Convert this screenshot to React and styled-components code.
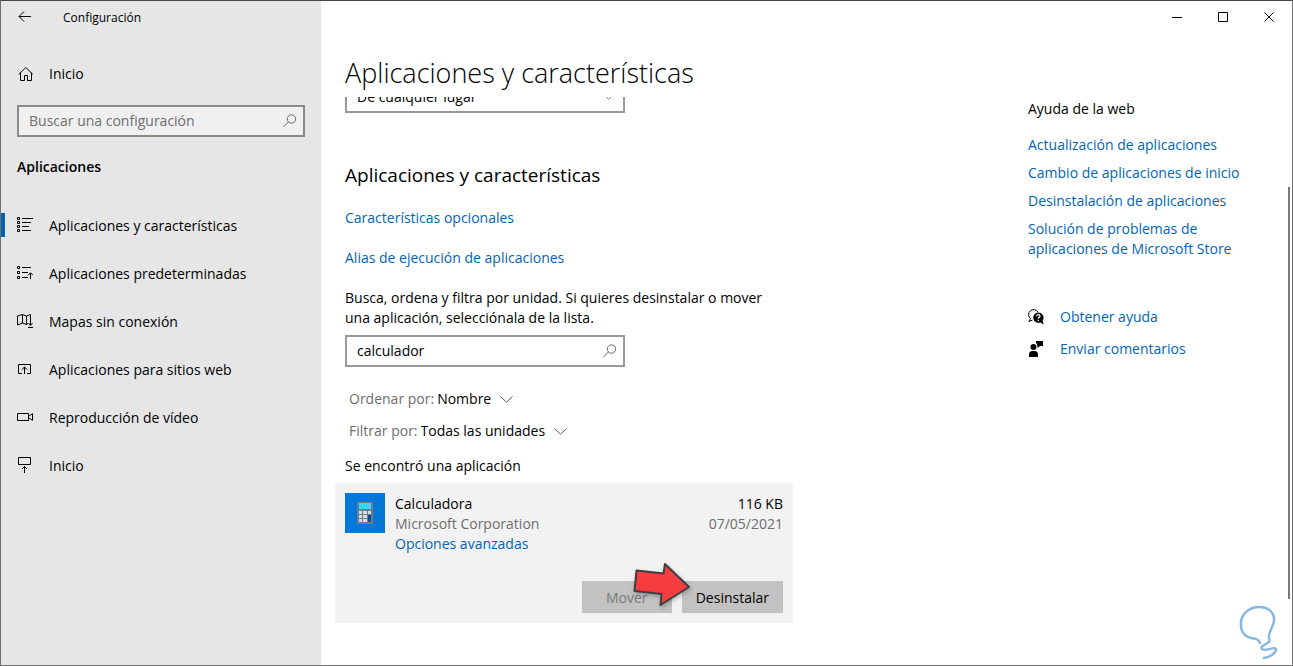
import React from 'react';
import styled, { createGlobalStyle } from 'styled-components';

const GlobalStyle = createGlobalStyle`
    * {
        box-sizing: border-box;
    }
    body {
        margin: 0;
        background-color: #fff;
        color: #000;
        font-family: 'Open Sans', 'Noto Sans', sans-serif;
        font-size: 14px;
        line-height: 20px;
    }
    button, input, select {
        font: inherit;
        color: inherit;
        border-radius: 0;
    }
    h1, h2, h3, p, ul {
        margin: 0;
        padding: 0;
    }
    ul {
        list-style: none;
    }
`

const SearchIcon = () => (
    <svg width="14" height="14" viewBox="0 0 14 14" fill="none" stroke="#6b6b6b">
        <circle cx="8.5" cy="5" r="4.2" />
        <path d="M5.4 8 L0.5 13" />
    </svg>
)

const Chevron = ({ width = 13 }) => (
    <svg width={width} height="7" viewBox="0 0 13 7" fill="none" stroke="#555">
        <path d="M0.5 0.5 L6.5 6.2 L12.5 0.5" />
    </svg>
)

const navList = [
    {
        text: 'Aplicaciones y características',
        active: true,
        icon: <path d="M0.5 0.5h2v2h-2z M0.5 4.5h2v2h-2z M0.5 8.5h2v2h-2z M0.5 12.5h2v2h-2z M5 1.5h11 M5 5.5h9 M5 9.5h7 M5 13.5h9" />,
    },
    {
        text: 'Aplicaciones predeterminadas',
        icon: <path d="M0.5 1.5h2v2h-2z M0.5 6.5h2v2h-2z M0.5 11.5h2v2h-2z M5 2.5h9 M5 7.5h6 M5 12.5h6 M13.5 14V8 M11 10.3l2.5-2.5 2.5 2.5" />,
    },
    {
        text: 'Mapas sin conexión',
        icon: <path d="M11 10.5L9.5 11.5L5.5 10L0.5 12V3L5.5 1.5L9.5 3L13.5 1.5V6 M5.5 1.5V10 M9.5 3V11.5 M13.5 6V12.5 M11.5 10l2 2.5 2-2.5 M11 14.5h5" />,
    },
    {
        text: 'Aplicaciones para sitios web',
        icon: <path d="M5 12.5H1.5v-9h12v9H10 M7.5 13V6 M4.8 8.7l2.7-2.7 2.7 2.7" />,
    },
    {
        text: 'Reproducción de vídeo',
        icon: <path d="M0.5 4.5h11v7h-11z M11.5 7.3L15.5 4.7v6.6L11.5 8.7" />,
    },
    {
        text: 'Inicio',
        icon: <path d="M1.5 0.5h12v7h-12z M7.5 16V9.5 M5 12l2.5-2.5L10 12" />,
    },
]

const webLinks = [
    'Actualización de aplicaciones',
    'Cambio de aplicaciones de inicio',
    'Desinstalación de aplicaciones',
    'Solución de problemas de aplicaciones de Microsoft Store',
]

const Sidebar = () => {
    return (
        <Side>
            <SideBar>
                <BackButton aria-label="Atrás">
                    <svg width="14" height="12" viewBox="0 0 14 12" fill="none" stroke="#000">
                        <path d="M13 5.5H1 M6 0.5L1 5.5l5 5" />
                    </svg>
                </BackButton>
                <WindowTitle>Configuración</WindowTitle>
            </SideBar>
            <HomeLink href="#inicio">
                <svg width="16" height="16" viewBox="0 0 16 16" fill="none" stroke="#000">
                    <path d="M0.8 8.3L7.8 1.5l7 6.8 M2.5 6.8v7.7h4v-5h3v5h4V6.8" />
                </svg>
                Inicio
            </HomeLink>
            <SearchBox as="label" $bg="#f0f0f0" $border="#8a8a8a">
                <SearchInput aria-label="Buscar una configuración" placeholder="Buscar una configuración" />
                <SearchIcon />
            </SearchBox>
            <SideTitle>Aplicaciones</SideTitle>
            <nav>
                {
                    navList.map((nav, index) => {
                        return (
                            <NavLink href={'#nav' + index} key={index} $active={nav.active}>
                                <svg width="16" height="16" viewBox="0 0 16 16" fill="none" stroke="#000">
                                    {nav.icon}
                                </svg>
                                <NavText>{nav.text}</NavText>
                            </NavLink>
                        )
                    })
                }
            </nav>
        </Side>
    )
}

const AppCard = () => {
    return (
        <Card>
            <CardTop>
                <AppIcon>
                    <svg width="16" height="22" viewBox="0 0 16 22">
                        <rect width="16" height="22" rx="1" fill="#6d7f8c" />
                        <rect x="2" y="1" width="12" height="6" fill="#45d0f5" />
                        <path d="M2 9h3v3H2z M6 9h4v3H6z M11 9h3v3h-3z M2 13h3v3H2z M6 13h4v3H6z M2 17h3v3H2z M6 17h4v3H6z" fill="#d5dbdf" />
                        <rect x="11" y="13" width="3" height="7" fill="#0b4a8b" />
                    </svg>
                </AppIcon>
                <AppInfo>
                    <p>Calculadora</p>
                    <Gray>Microsoft Corporation</Gray>
                    <Link href="#opciones">Opciones avanzadas</Link>
                </AppInfo>
                <AppMeta>
                    <p>116 KB</p>
                    <Gray>07/05/2021</Gray>
                </AppMeta>
            </CardTop>
            <Buttons>
                <CardButton disabled>Mover</CardButton>
                <CardButton>Desinstalar</CardButton>
                <Pointer width="60" height="46" viewBox="0 0 60 46">
                    <path d="M4 8L31 12L33 2L57 25L28 43L29 32L2 29Z" fill="#f53d40" stroke="none" />
                    <path d="M4.5 8.5L31.5 11.5L33 2L57 25L28.5 43L29.5 32L2.5 29Z" fill="#f53d40" stroke="#3c3f40" strokeWidth="2" strokeLinejoin="round" />
                </Pointer>
            </Buttons>
        </Card>
    )
}

const Help = () => {
    return (
        <HelpWrap>
            <h3>Ayuda de la web</h3>
            <ul>
                {
                    webLinks.map((text, index) => {
                        return (
                            <li key={index}><Link href={'#ayuda' + index}>{text}</Link></li>
                        )
                    })
                }
            </ul>
            <HelpRow href="#ayuda">
                <svg width="16" height="16" viewBox="0 0 16 16">
                    <path d="M2.6 9.6A5 5 0 1 1 10 3.2 M2.6 9.6L0.8 12.4L4.5 11.2" fill="none" stroke="#000" />
                    <path d="M10.2 3.4a5.2 5.2 0 0 1 4.4 8.2L15.8 15.4L12.4 13.4A5.2 5.2 0 1 1 10.2 3.4z" fill="#000" />
                    <path d="M8.6 7.2a1.7 1.5 0 1 1 2.6 1.2q-0.9 0.5-0.9 1.3 M10.3 10.8v1.2" fill="none" stroke="#fff" strokeWidth="1.2" />
                </svg>
                Obtener ayuda
            </HelpRow>
            <HelpRow href="#comentarios">
                <svg width="16" height="16" viewBox="0 0 16 16">
                    <circle cx="5.5" cy="6" r="3" />
                    <path d="M1 16v-2.5q0-3.5 3.5-3.5h2q3.5 0 3.5 3.5V16z M8 0h7v5h-3l-2.5 2V5H9.2Q9.4 2.5 8 2z" />
                </svg>
                Enviar comentarios
            </HelpRow>
        </HelpWrap>
    )
}

const App = () => {
    return (
        <Window>
            <GlobalStyle />
            <Sidebar />
            <Main>
                <Controls>
                    <ControlButton aria-label="Minimizar">
                        <svg width="11" height="11" fill="none" stroke="#000"><path d="M0 5.5h10" /></svg>
                    </ControlButton>
                    <ControlButton aria-label="Maximizar">
                        <svg width="11" height="11" fill="none" stroke="#000"><path d="M0.5 0.5h9v9h-9z" /></svg>
                    </ControlButton>
                    <ControlButton aria-label="Cerrar">
                        <svg width="11" height="11" fill="none" stroke="#000"><path d="M0.5 0.5l9 9 M9.5 0.5l-9 9" /></svg>
                    </ControlButton>
                </Controls>
                <PageTitle>Aplicaciones y características</PageTitle>
                <Scroll>
                    <Content>
                        <Origin>
                            <OriginSelect aria-label="Elegir de dónde obtener aplicaciones">
                                <option>De cualquier lugar</option>
                            </OriginSelect>
                            <Chevron width={9} />
                        </Origin>
                        <h2>Aplicaciones y características</h2>
                        <LinkRow><Link href="#opcionales">Características opcionales</Link></LinkRow>
                        <LinkRow><Link href="#alias">Alias de ejecución de aplicaciones</Link></LinkRow>
                        <Intro>
                            Busca, ordena y filtra por unidad. Si quieres desinstalar o mover una aplicación, selecciónala de la lista.
                        </Intro>
                        <SearchBox as="label" $bg="#fff" $border="#999">
                            <SearchInput aria-label="Buscar en esta lista" defaultValue="calculador" />
                            <SearchIcon />
                        </SearchBox>
                        <Filters>
                            <Filter>
                                Ordenar por:
                                <FilterSelect><option>Nombre</option></FilterSelect>
                                <Chevron />
                            </Filter>
                            <Filter>
                                Filtrar por:
                                <FilterSelect><option>Todas las unidades</option></FilterSelect>
                                <Chevron />
                            </Filter>
                        </Filters>
                        <p>Se encontró una aplicación</p>
                        <AppCard />
                    </Content>
                    <Help />
                    <Rail><Thumb /></Rail>
                </Scroll>
            </Main>
            <Bulb width="42" height="56" viewBox="0 0 42 56" fill="none" stroke="#86b7e2" strokeWidth="2.4" strokeLinecap="round">
                <path d="M22 38C20 33 17 34 13 33C5 31 2 24 3 17C4 8 12 2 21 2C31 2 37 8 36 16C35 23 31 26 31 31C31 34 32 35 31 37C27 40 22 41 24 44C27 47 37 41 38 44C38 49 31 52 26 53" />
            </Bulb>
        </Window>
    )
}

const Window = styled.div`
    position: relative;
    display: flex;
    min-height: 100vh;
    border: 1px solid #707070;
    border-top-color: #484848;
    overflow: hidden;
`

const Side = styled.aside`
    flex: 0 0 320px;
    background-color: #e6e6e6;
    a {
        color: #000;
        text-decoration: none;
    }
    > label {
        margin: 7px 16px 0;
    }
`

const SideBar = styled.div`
    display: flex;
    align-items: center;
    height: 32px;
`

const BackButton = styled.button`
    display: flex;
    align-items: center;
    justify-content: center;
    width: 48px;
    height: 32px;
    padding: 0;
    border: 0;
    background: none;
`

const WindowTitle = styled.span`
    margin-left: 14px;
    padding-top: 2px;
    font-size: 12px;
`

const HomeLink = styled.a`
    display: flex;
    align-items: center;
    gap: 15px;
    height: 48px;
    margin-top: 17px;
    padding-left: 17px;
`

const SearchBox = styled.div`
    display: flex;
    align-items: center;
    height: 32px;
    padding: 0 6px 0 10px;
    border: 2px solid ${props => props.$border};
    background-color: ${props => props.$bg};
`

const SearchInput = styled.input`
    flex: 1;
    min-width: 0;
    padding: 0;
    border: 0;
    outline: 0;
    background: none;
    &::placeholder {
        color: #6e6e6e;
        opacity: 1;
    }
`

const SideTitle = styled.h3`
    margin: 20px 16px 24px;
    font-size: 14px;
    font-weight: 600;
`

const NavLink = styled.a`
    display: flex;
    align-items: center;
    height: 48px;
    &::before {
        content: '';
        width: 4px;
        height: 24px;
        margin-right: 12px;
        background-color: ${props => props.$active ? '#0063b1' : 'transparent'};
    }
    svg {
        margin-right: 16px;
    }
`

const NavText = styled.span`
    padding-top: 2px;
`

const Main = styled.main`
    flex: 1;
    min-width: 0;
    display: flex;
    flex-direction: column;
`

const Controls = styled.div`
    display: flex;
    justify-content: flex-end;
`

const ControlButton = styled.button`
    display: flex;
    align-items: center;
    justify-content: center;
    width: 46px;
    height: 32px;
    padding: 0;
    border: 0;
    background: none;
`

const PageTitle = styled.h1`
    margin: 20px 24px 4px;
    font-size: 27px;
    font-weight: 300;
    line-height: 40px;
`

const Scroll = styled.div`
    flex: 1;
    display: flex;
    overflow: hidden;
`

/* the list is already scrolled by half a row */
const Content = styled.div`
    flex: 1;
    margin-top: -16px;
    padding: 0 24px 40px;
    h2 {
        margin-top: 48px;
        font-size: 19px;
        font-weight: 400;
        line-height: 28px;
    }
    > label {
        max-width: 280px;
        margin-top: 7px;
    }
`

const Origin = styled.div`
    display: flex;
    align-items: center;
    max-width: 280px;
    height: 32px;
    padding-right: 10px;
    border: 2px solid #999;
`

const OriginSelect = styled.select`
    flex: 1;
    padding: 0 10px;
    border: 0;
    background: none;
    appearance: none;
`

const Link = styled.a`
    color: #0065b9;
    text-decoration: none;
`

const LinkRow = styled.p`
    margin-top: 20px;
    h2 + & {
        margin-top: 19px;
    }
`

const Intro = styled.p`
    max-width: 440px;
    margin-top: 20px;
`

const Filters = styled.div`
    display: flex;
    flex-direction: column;
    gap: 12px;
    margin: 22px 4px 15px;
`

const Filter = styled.label`
    display: flex;
    align-items: center;
    color: #6e6e6e;
    svg {
        margin-left: 8px;
    }
`

const FilterSelect = styled.select`
    height: 20px;
    margin-left: 3px;
    padding: 0;
    border: 0;
    background: none;
    color: #000;
    appearance: none;
`

const Card = styled.section`
    max-width: 458px;
    margin: 7px 0 0 -10px;
    padding: 10px;
    background-color: #f2f2f2;
`

const CardTop = styled.div`
    display: flex;
    gap: 10px;
`

const AppIcon = styled.div`
    display: flex;
    align-items: center;
    justify-content: center;
    width: 40px;
    height: 40px;
    background-color: #0078d7;
`

const AppInfo = styled.div`
    flex: 1;
    padding-top: 1px;
`

const AppMeta = styled.div`
    padding-top: 1px;
    text-align: right;
`

const Gray = styled.p`
    color: #6e6e6e;
`

const Buttons = styled.div`
    position: relative;
    display: flex;
    justify-content: flex-end;
    gap: 10px;
    margin-top: 27px;
`

const CardButton = styled.button`
    min-width: 90px;
    height: 32px;
    padding: 2px 14px 0;
    border: 0;
    background-color: #c2c2c2;
    &:disabled {
        color: #7a7a7a;
    }
`

const Pointer = styled.svg`
    position: absolute;
    right: 91px;
    top: -19px;
    filter: drop-shadow(1px 2px 2px rgb(0 0 0 / 25%));
`

const HelpWrap = styled.aside`
    flex: 0 0 232px;
    margin-right: 27px;
    padding-top: 2px;
    h3 {
        font-size: 14px;
        font-weight: 400;
    }
    ul {
        display: flex;
        flex-direction: column;
        gap: 8px;
        margin: 16px 0 48px;
    }
`

const HelpRow = styled(Link)`
    display: flex;
    align-items: center;
    gap: 16px;
    margin-bottom: 12px;
`

const Rail = styled.div`
    display: flex;
    width: 5px;
    padding: 90px 2px 66px 1px;
`

const Thumb = styled.div`
    flex: 1;
    background-color: #7a7a7a;
`

const Bulb = styled.svg`
    position: absolute;
    right: 12px;
    bottom: 4px;
`

export default App;
